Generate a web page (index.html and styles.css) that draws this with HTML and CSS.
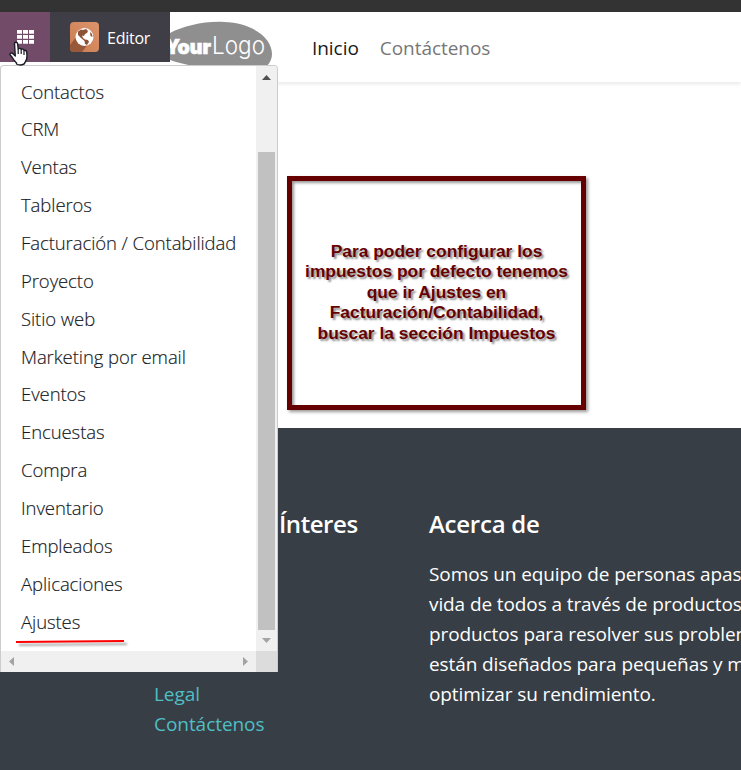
FILE: index.html
```html
<!DOCTYPE html>
<html lang="es">
<head>
<meta charset="utf-8">
<title>Inicio</title>
<link rel="stylesheet" href="styles.css">
</head>
<body>
<div class="page">
  <div class="strip"></div>
  <header class="header">
    <div class="toolbar">
      <button class="apps" aria-label="Apps">
        <svg width="17" height="14" viewBox="0 0 17 14" fill="#fff"><path d="M0 0h5v3.700H0zM6 0h5v3.700H6zM12 0h5v3.700h-5zM0 5h5v3.700H0zM6 5h5v3.700H6zM12 5h5v3.700h-5zM0 10h5v3.700H0zM6 10h5v3.700H6zM12 10h5v3.700h-5z"/></svg>
      </button>
      <div class="editor">
        <svg class="globe" width="29" height="30" viewBox="0 0 29 30">
          <defs><linearGradient id="g" x1="0" y1="1" x2="1" y2="0"><stop offset="0" stop-color="#c87b50"/><stop offset="1" stop-color="#de956c"/></linearGradient></defs>
          <rect width="29" height="30" rx="4" fill="url(#g)"/>
          <path d="M8 21 21 9 24 14 12 30H4Q0 30 0 26V23L7 14z" fill="#98593a"/>
          <circle cx="14.500" cy="15" r="9" fill="#fff"/>
          <path d="M8 9.500 11 7.500 13 8 16 7 18 9 17 11 15 12 14 14 12 13.500 13 16 15 17.500 18 18 19 20 17 23 15 22 14.500 19 11 16 8 13zM20 10 22 12 22.500 15 20.500 14z" fill="#8d5236"/>
        </svg>
        <span>Editor</span>
      </div>
    </div>
    <svg class="logo" width="103" height="54" viewBox="170 12 103 54">
      <path d="M170 33C184 26 204 21 224 22C253 23 272 38 272 54C272 59 270 63 266 67H200Q182 64 170 60z" fill="#8f8f8f"/>
      <text class="your" x="165" y="54" textLength="46" lengthAdjust="spacingAndGlyphs">Your</text>
      <text class="logo-light" x="212" y="54" textLength="53" lengthAdjust="spacingAndGlyphs">Logo</text>
    </svg>
    <nav class="nav"><a class="active">Inicio</a><a>Contáctenos</a></nav>
  </header>
  <main class="main">
    <div class="note">Para poder configurar los<br>impuestos por defecto tenemos<br>que ir Ajustes en<br>Facturación/Contabilidad,<br>buscar la sección Impuestos</div>
  </main>
  <footer class="footer">
    <section class="links">
      <h2>Ínteres</h2>
      <a>Legal</a>
      <a>Contáctenos</a>
    </section>
    <section class="about">
      <h2>Acerca de</h2>
      <p>Somos un equipo de personas apas<br>vida de todos a través de productos<br>productos para resolver sus problem<br>están diseñados para pequeñas y m<br>optimizar su rendimiento.</p>
    </section>
  </footer>

  <div class="menu">
    <ul class="items">
      <li>Contactos</li><li>CRM</li><li>Ventas</li><li>Tableros</li><li>Facturación / Contabilidad</li><li>Proyecto</li><li>Sitio web</li><li>Marketing por email</li><li>Eventos</li><li>Encuestas</li><li>Compra</li><li>Inventario</li><li>Empleados</li><li>Aplicaciones</li><li>Ajustes</li>
    </ul>
    <div class="vbar">
      <svg width="9" height="5" viewBox="0 0 9 5"><path d="M0 5 4.500 0 9 5z" fill="#505050"/></svg>
      <div class="thumb"></div>
      <svg width="9" height="5" viewBox="0 0 9 5"><path d="M0 0h9L4.500 5z" fill="#a3a3a3"/></svg>
    </div>
    <div class="hbar">
      <svg width="5" height="9" viewBox="0 0 5 9"><path d="M5 0v9L0 4.500z" fill="#a3a3a3"/></svg>
      <svg width="5" height="9" viewBox="0 0 5 9"><path d="M0 0v9L5 4.500z" fill="#a3a3a3"/></svg>
    </div>
    <div class="corner"></div>
    <svg class="underline" width="116" height="10" viewBox="0 0 116 10"><path d="M1 3 54 2.500 109 2" stroke="#f00" stroke-width="1.900" fill="none"/></svg>
  </div>
  <svg class="cursor" width="20" height="26" viewBox="0 0 20 26"><path d="M5.500 2.200C6.200.8 8.300 1 8.600 2.700L9.200 8C10 7 11.800 7.200 12.200 8.500 13 7.700 14.700 8 15 9.500 16 9 17.500 9.500 17.700 11L18 15Q18 19 16 21.500L15 23Q11 25 7.500 23V22Q5 19.500 3.300 16.500L1 13.800C.6 12 2.600 11.300 4 12.800L6.300 15z" fill="#fff" stroke="#1b1b25" stroke-width="1.400" stroke-linejoin="round"/><path d="M9.200 8V13M12.200 9V13M15 10V14" stroke="#1b1b25" stroke-width="1.200"/></svg>
</div>
</body>
</html>
```
FILE: styles.css
```css
* { box-sizing: border-box; }
body { margin: 0; font-family: "Open Sans", "Noto Sans", sans-serif; font-size: 19px; color: #212529; background: #fff; }
.page { position: relative; width: 741px; height: 770px; overflow: hidden; display: flex; flex-direction: column; }
.strip { height: 12px; flex: none; background: #333; }
.header { height: 70px; flex: none; display: flex; align-items: flex-start; background: #fff; box-shadow: 0 2px 4px rgba(0,0,0,.09); }
.toolbar { display: flex; width: 170px; height: 50px; color: #fff; }
.apps { width: 50px; border: 0; padding: 0; background: #714b67; display: flex; align-items: center; justify-content: center; }
.editor { flex: 1; display: flex; align-items: center; padding-left: 20px; gap: 8px; background: #3f3e47; font-size: 16px; letter-spacing: -.25px; line-height: 24px; }
.editor span { padding-top: 2px; }
.logo { flex: none; }
.your { font: 900 20px Inter, sans-serif; fill: #fff; stroke: #fff; stroke-width: .6px; }
.logo-light { font: 300 24px Inter, sans-serif; fill: #fff; }
.nav { display: flex; gap: 21px; padding: 21px 0 0 39px; line-height: 30px; letter-spacing: -.05px; }
.nav a { color: #777; }
.nav .active { color: #191919; }
.main { height: 346px; flex: none; padding: 94px 0 0 287px; }
.note { width: 299px; height: 234px; border: 5px solid #660000; padding-bottom: 2px; display: flex; align-items: center; justify-content: center; text-align: center; font: bold 17.400px/20.500px "Liberation Sans", Arial, sans-serif; white-space: nowrap; color: #600; text-shadow: 2px 2px 2px rgba(0,0,0,.45); box-shadow: 2px 2px 3px rgba(0,0,0,.4), inset 2px 2px 3px rgba(0,0,0,.4); }
.footer { flex: 1; display: grid; grid-template-columns: 275px 500px; padding: 79px 0 0 154px; background: #383e45; color: #fff; }
.footer h2 { margin: 0; font-size: 24px; line-height: 34px; font-weight: 600; letter-spacing: -.25px; }
.links { display: flex; flex-direction: column; }
.footer .links h2 { padding: 0 0 0 125px; margin-bottom: 138px; letter-spacing: -.45px; }
.links a { color: #4fbfc4; line-height: 30px; letter-spacing: -.05px; }
.about p { margin: 18px 0 0; line-height: 30px; white-space: nowrap; letter-spacing: -.1px; }
.menu { position: absolute; left: 0; top: 65px; width: 278px; height: 607px; display: grid; grid-template: 585px 21px / 255px 21px; background: #fff; border: 1px solid #ccc; border-bottom: 0; border-radius: 4px 4px 0 0; overflow: hidden; }
.items { list-style: none; margin: 0; padding: 6.500px 0 0 20px; font-size: 18.500px; font-weight: 350; color: #15181c; -webkit-text-stroke: .15px #15181c; }
.items li { height: 37.860px; line-height: 37.860px; white-space: nowrap; letter-spacing: -.08px; }
.vbar { background: #f0f0f0; display: flex; flex-direction: column; align-items: center; padding: 9px 0 8px; }
.thumb { width: 17px; height: 478px; margin: 72px 0 8px; background: #c1c1c1; }
.hbar { background: #f0f0f0; display: flex; align-items: center; justify-content: space-between; padding: 0 8px; }
.corner { background: #dcdcdc; }
.underline { position: absolute; left: 14px; top: 573px; filter: drop-shadow(3px 3px 1px rgba(0,0,0,.35)); }
.cursor { position: absolute; left: 9px; top: 41px; }
```
